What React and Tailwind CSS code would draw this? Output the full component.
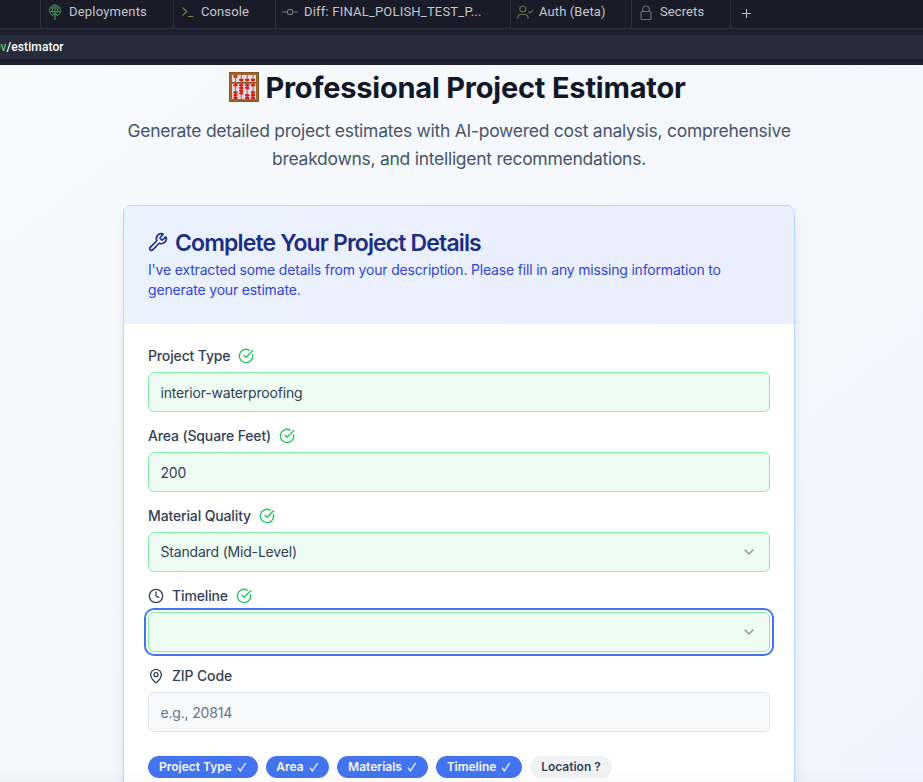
import { CircleCheckBig, Clock, MapPin, Wrench, ChevronDown } from "lucide-react";

function DeployIcon() {
  return (
    <svg width="14" height="17" viewBox="0 0 14 17" fill="none" stroke="#3f8a55" strokeWidth="1">
      <path d="M3.8 11.2A5.6 5.6 0 1 1 10.2 11.2" />
      <path d="M4.6 9C4 4.6 5 1.2 7 1.2S10 4.6 9.400 9M1.600 4h10.800M1.400 7.500h11.200M7 1.200v6.800" />
      <path d="M7 16V9.500M4 12l3-3 3 3" strokeWidth="1.300" />
    </svg>
  );
}

function ConsoleIcon() {
  return (
    <svg width="14" height="14" viewBox="0 0 14 14" fill="none" stroke="#8c7a45" strokeWidth="1.100">
      <path d="M1.500 2.500 5.800 6.500 1.500 10.500M7 11.500h5.500" />
    </svg>
  );
}

function CommitIcon() {
  return (
    <svg width="16" height="10" viewBox="0 0 16 10" fill="none" stroke="#6b707c" strokeWidth="1.200">
      <circle cx="8" cy="5" r="2.700" />
      <path d="M0 5h5.300M10.700 5H16" />
    </svg>
  );
}

function AuthIcon() {
  return (
    <svg width="17" height="15" viewBox="0 0 17 15" fill="none" stroke="#5d7548" strokeWidth="1.100">
      <circle cx="5.900" cy="4" r="3" />
      <path d="M.8 14v-1.500c0-2 1.300-3 3-3H8c1.700 0 3 1 3 3V14M11.500 6.500l1.500 1.500 3-3" />
    </svg>
  );
}

function LockIcon() {
  return (
    <svg width="12" height="16" viewBox="0 0 12 16" fill="none" stroke="#6b707c" strokeWidth="1.100" className="mt-0.5">
      <rect x="1" y="6.500" width="10" height="8" rx="1.300" />
      <path d="M2.800 6.500V4.200a3.200 3.200 0 0 1 6.400 0v2.300" />
    </svg>
  );
}

const beadRows = [
  { x: 6.5, ys: [4.5, 13.2, 20.5, 23.2, 26] },
  { x: 12.3, ys: [8, 13.2, 16, 18.7, 21.4] },
  { x: 18.2, ys: [8, 13.2, 16, 23.2, 26] },
  { x: 24, ys: [8, 13.2, 20.5, 23.2, 26] },
];

function Abacus() {
  return (
    <svg width="30" height="30" viewBox="0 0 30 30">
      <rect width="30" height="30" rx=".8" fill="#9a5f26" />
      <rect x="3" y="3" width="24" height="24" fill="#e4dade" />
      {beadRows.map((r) => (
        <g key={r.x}>
          <path d={`M${r.x} 3v24`} stroke="#8f4a44" strokeWidth=".8" />
          {r.ys.map((y) => (
            <rect key={y} x={r.x - 2.2} y={y - 1.2} width="4.400" height="2.400" rx="1.100" fill="#cf2219" />
          ))}
        </g>
      ))}
      <rect x="2" y="10" width="26" height="1.700" fill="#8a5524" />
      <rect x="1.500" y="1.500" width="27" height="27" fill="none" stroke="#a0672c" strokeWidth="2.400" />
      <rect x=".5" y=".5" width="29" height="29" fill="none" stroke="#855427" />
    </svg>
  );
}

function Label({ icon, text, done }) {
  return (
    <div className="flex h-4 items-center gap-2 text-sm leading-none font-medium text-[#334155]">
      {icon}
      <span className="tracking-[-0.14px]">{text}</span>
      {done && <CircleCheckBig size={16} className="text-[#22c55e]" />}
    </div>
  );
}

function Field({ label, value, select, focused, placeholder }) {
  return (
    <div className="flex flex-col gap-2">
      {label}
      <div
        className={`flex h-10 items-center justify-between rounded-md border pr-3 pl-[11.5px] text-sm tracking-[-0.18px] ${
          placeholder ? "border-[#e2e5eb] bg-[#f8f9fb] text-[#64748b]" : "border-[#86efac] bg-[#effcf3] text-[#334155]"
        } ${focused ? "ring-2 ring-[#4373ee] ring-offset-2" : ""}`}
      >
        <span className={select ? "" : "pt-0.5"}>{value}</span>
        {select && <ChevronDown size={16} className="text-[#8b9792]" />}
      </div>
    </div>
  );
}

function Pill({ text, mark, className }) {
  return (
    <span className={`flex h-[22px] items-center justify-center rounded-full text-xs font-semibold ${className}`}>
      {text} {mark && <svg width="10" height="10" viewBox="0 0 10 10" className="ml-[5px]" fill="none" stroke="currentColor" strokeWidth="1.300"><path d="M1 5.500 3.300 8.800 8.700 1" /></svg>}
    </span>
  );
}

const tab = "flex h-full shrink-0 items-center border-l border-[#2a2f3d] pb-1 whitespace-nowrap";

export default function App() {
  return (
    <div className="relative flex h-[782px] w-[923px] flex-col overflow-hidden font-[Inter,sans-serif]">
      <header className="shrink-0 bg-[#1c202c] font-['Roboto','Noto_Sans',sans-serif] text-[13px] text-[#c3c6cd]">
        <div className="flex h-[29px] border-b border-[#2a2f3d] bg-[#191c28] pl-10">
          <div className={`${tab} w-[133px] gap-[7px] pl-[7px]`}><DeployIcon /><span className="tracking-[0.2px]">Deployments</span></div>
          <div className={`${tab} w-[102px] gap-[6px] pl-[7px]`}><ConsoleIcon /><span className="tracking-[0.1px]">Console</span></div>
          <div className={`${tab} w-[235px] gap-[6px] pl-[6px]`}><CommitIcon /><span className="tracking-[0.2px]">Diff: FINAL_POLISH_TEST_P...</span></div>
          <div className={`${tab} w-[121px] gap-[5px] pl-[6px]`}><AuthIcon /><span className="tracking-[0.1px]">Auth (Beta)</span></div>
          <div className={`${tab} w-[99px] gap-2 pl-2`}><LockIcon /><span className="tracking-[0.1px]">Secrets</span></div>
          <div className={`${tab} pl-[11px]`}><svg width="9" height="9" viewBox="0 0 9 9" stroke="#b9bdc5" strokeWidth="1.100" className="mt-0.5"><path d="M0 4.500h9M4.500 0v9" /></svg></div>
        </div>
        <div className="mt-1.5 flex h-6 items-center overflow-hidden bg-[#272c3b] text-xs font-medium tracking-[0.1px] text-white">
          <span className="-ml-1.5 text-[#55c76f]">ev</span><span>/estimator</span>
        </div>
        <div className="h-1.5" />
      </header>

      <main className="flex min-h-0 flex-1 flex-col items-center overflow-hidden bg-linear-to-br from-[#f8fafc] to-[#eff4fe] pr-[5px]">
        <div className="mt-1 flex h-9 shrink-0 items-center gap-1.5 pr-[3px]">
          <Abacus />
          <h1 className="pt-px text-[29px] leading-9 font-bold tracking-[-0.21px] whitespace-nowrap text-[#111827]">Professional Project Estimator</h1>
        </div>
        <p className="mt-3 w-[671px] shrink-0 text-center text-[17.5px] leading-7 tracking-[-0.27px] whitespace-nowrap text-[#475569]">
          Generate detailed project estimates with AI-powered cost analysis, comprehensive<br />breakdowns, and intelligent recommendations.
        </p>
        <section className="mt-8 h-[800px] w-[672px] shrink-0 rounded-lg border border-[#bcd6fb] bg-white shadow-lg">
          <div className="h-[118px] rounded-t-lg bg-linear-to-r from-[#eaf2fe] to-[#ebeefd] px-6 pt-6">
            <h2 className="flex h-6 items-center gap-[7px] text-[23px] leading-none font-semibold tracking-[-0.86px] text-[#1e2f80]">
              <Wrench size={20} /><span className="pt-0.5">Complete Your Project Details</span>
            </h2>
            <p className="mt-1.5 text-sm leading-5 tracking-[-0.18px] text-[#3345d2]">
              I've extracted some details from your description. Please fill in any missing information to<br />generate your estimate.
            </p>
          </div>
          <div className="flex flex-col gap-4 px-6 pt-6">
            <Field label={<Label text="Project Type" done />} value="interior-waterproofing" />
            <Field label={<Label text="Area (Square Feet)" done />} value="200" />
            <Field label={<Label text="Material Quality" done />} value="Standard (Mid-Level)" select />
            <Field label={<Label icon={<Clock size={16} />} text="Timeline" done />} value="" select focused />
            <Field label={<Label icon={<MapPin size={16} />} text="ZIP Code" />} value="e.g., 20814" placeholder />
            <div className="mt-2 flex gap-2">
              <Pill text="Project Type" mark className="w-[110px] bg-[#4373ee] text-[#f3f7ff]" />
              <Pill text="Area" mark className="w-[63px] bg-[#4373ee] text-[#f3f7ff]" />
              <Pill text="Materials" mark className="w-[91px] bg-[#4373ee] text-[#f3f7ff]" />
              <Pill text="Timeline" mark className="w-[86px] bg-[#4373ee] text-[#f3f7ff]" />
              <Pill text="Location ?" className="w-[82px] bg-[#f1f2f4] text-[#334155]" />
            </div>
          </div>
        </section>
      </main>
      <div className="absolute inset-x-0 bottom-0 h-3 bg-linear-to-b from-transparent to-black/[0.02]" />
    </div>
  );
}
